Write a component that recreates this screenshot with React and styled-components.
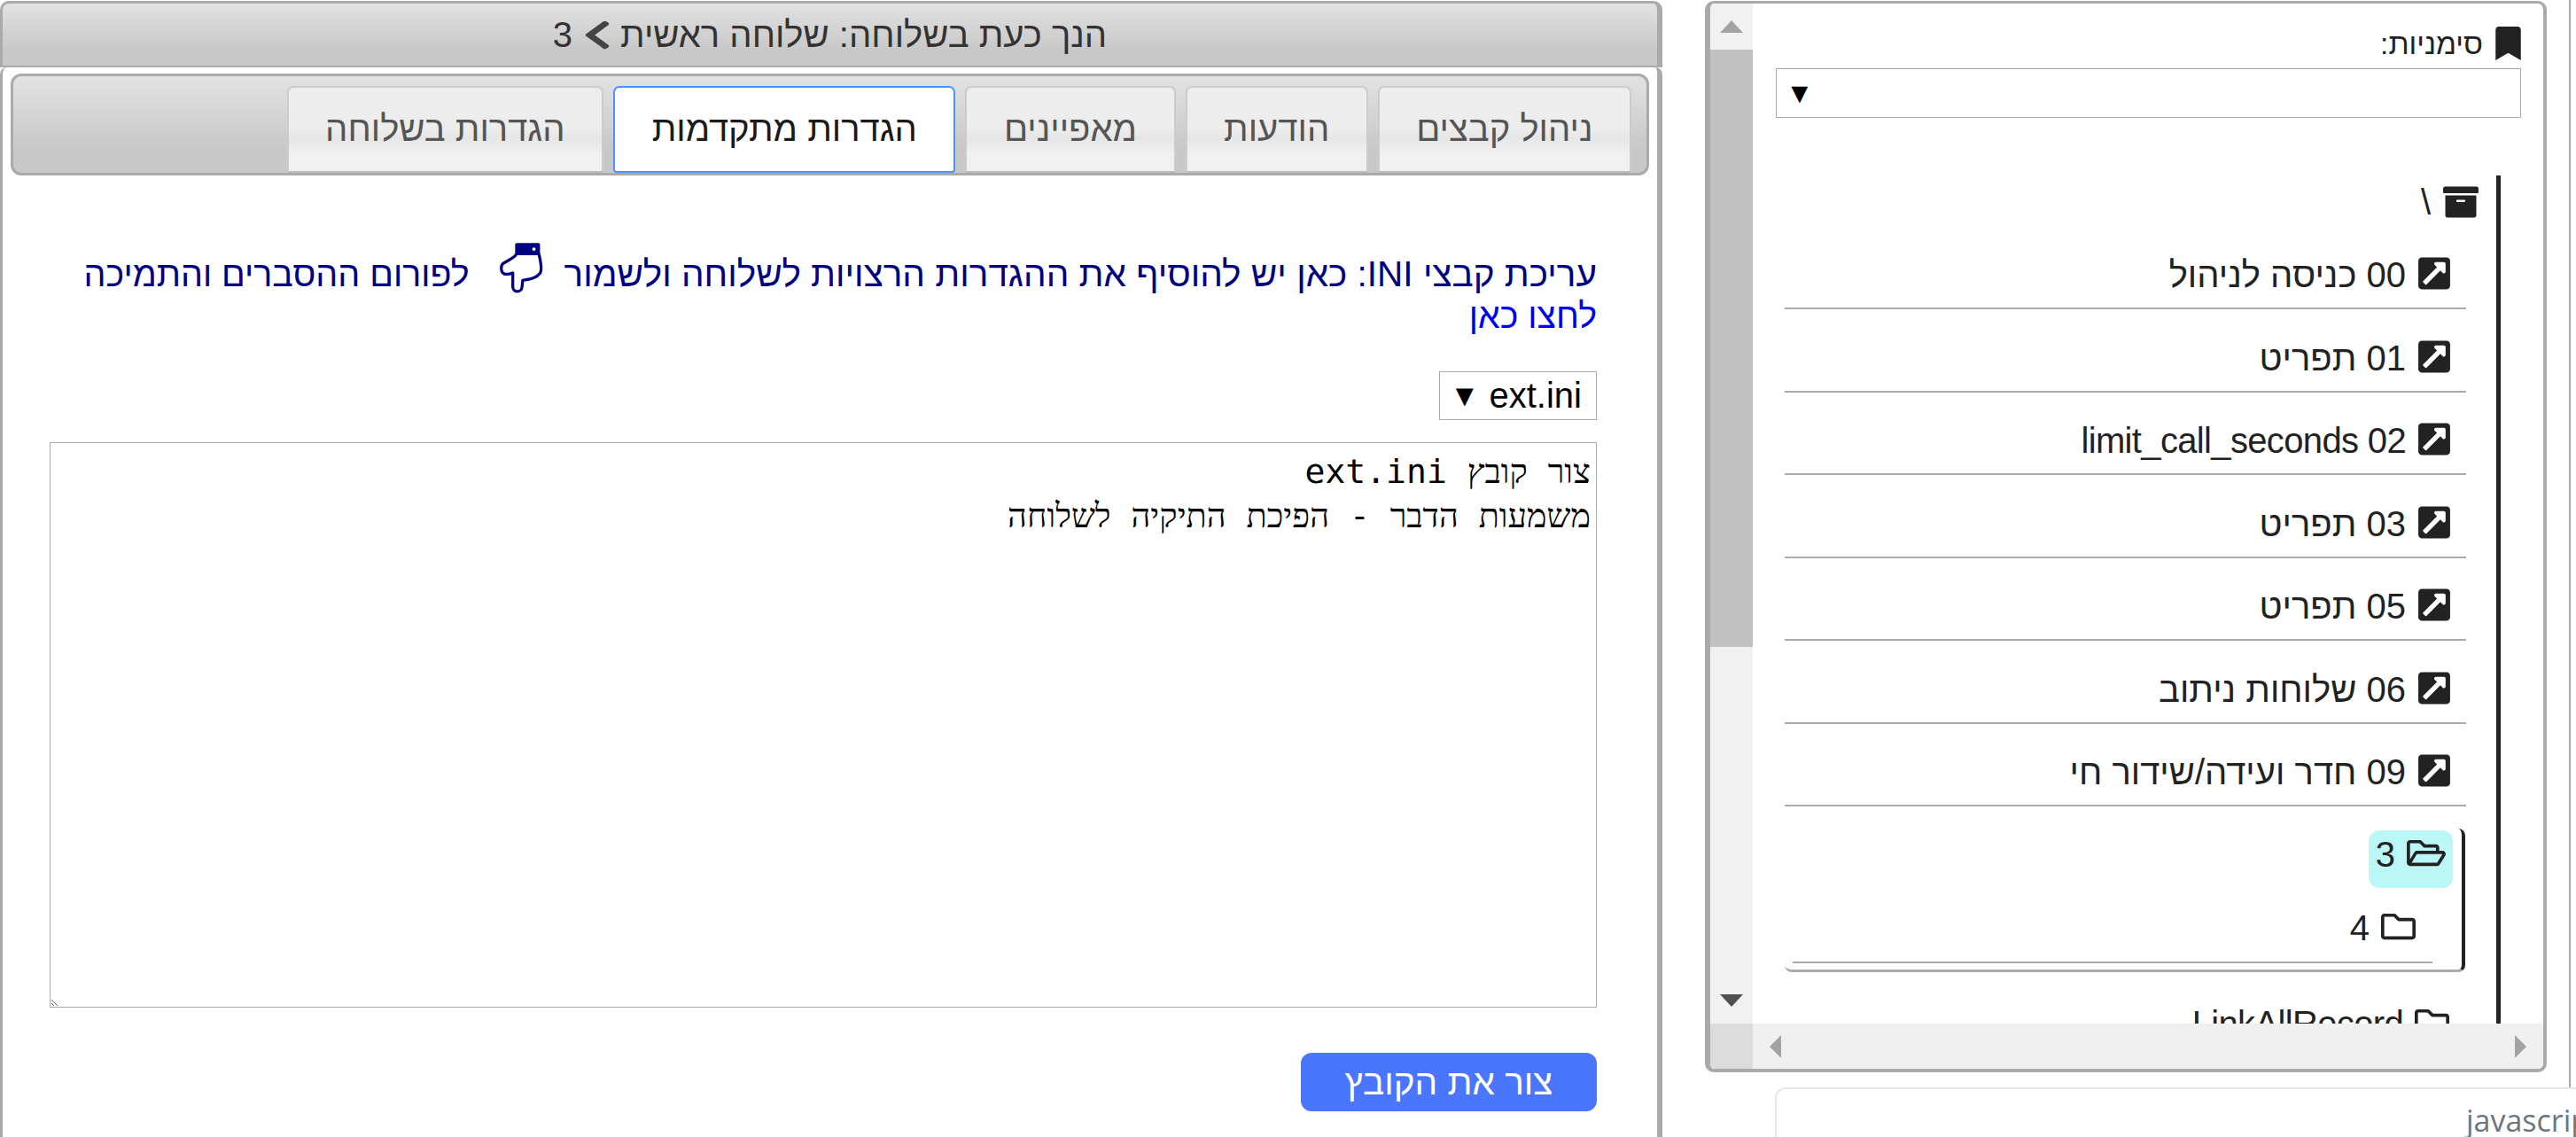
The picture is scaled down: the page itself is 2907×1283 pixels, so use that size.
import React from 'react';
import styled, { createGlobalStyle } from 'styled-components';
import {
  FaBookmark,
  FaArchive,
  FaExternalLinkSquareAlt,
  FaRegFolder,
  FaRegFolderOpen,
  FaChevronLeft,
} from 'react-icons/fa';

const GlobalStyle = createGlobalStyle`
  html, body {
    margin: 0;
    padding: 0;
    background: #fff;
    overflow: hidden;
  }
  * {
    box-sizing: border-box;
  }
`;

const Page = styled.div`
  direction: rtl;
  display: flex;
  gap: 48px;
  width: 2907px;
  height: 1283px;
  overflow: hidden;
  font-family: 'Liberation Sans', Arial, sans-serif;
  color: #222;
`;

const SideColumn = styled.aside`
  width: 983px;
  flex: none;
  display: flex;
  flex-direction: column;
`;

const SideTop = styled.div`
  display: flex;
  height: 1227px;
  flex: none;
`;

const EdgeStrip = styled.div`
  width: 33px;
  flex: none;
  padding-right: 6px;
  &::after {
    content: '';
    display: block;
    height: 100%;
    width: 2px;
    background: #aaa;
  }
`;

const SidePanel = styled.div`
  width: 950px;
  height: 1209px;
  margin-top: 1px;
  border: solid #aaa;
  border-width: 3px 4px 4px 6px;
  border-radius: 10px;
  overflow: hidden;
  display: grid;
  grid-template-columns: 1fr 48px;
  grid-template-rows: 1fr 51px;
`;

const SideScroll = styled.div`
  overflow: hidden;
  padding: 27px 25px 0 0;
  min-height: 0;
`;

const BookmarkLabel = styled.div`
  display: flex;
  align-items: center;
  gap: 14px;
  height: 36px;
  font-size: 33.5px;
  svg {
    width: 29px;
    height: 38px;
  }
  span {
    padding-top: 2px;
  }
`;

const SelectBox = styled.div`
  display: flex;
  align-items: center;
  justify-content: flex-end;
  height: 56px;
  width: 841px;
  margin-top: 10px;
  padding-left: 10px;
  border: 1.5px solid #aaa;
  font-size: 32px;
  color: #000;
`;

const Tree = styled.div`
  margin: 65px 23px 0 0;
  padding-right: 20px;
  border-right: 5px solid #222;
  height: 960px;
  width: 820px;
  overflow: hidden;
`;

const RootRow = styled.div`
  display: flex;
  align-items: center;
  gap: 14px;
  height: 36px;
  margin: 12px 0 44px;
  font-size: 40px;
  svg {
    width: 40px;
    height: 40px;
  }
`;

const LinkRow = styled.div`
  display: flex;
  align-items: center;
  gap: 14px;
  height: 59px;
  width: 769px;
  margin: 0 14px 34.5px 0;
  padding-bottom: 20px;
  border-bottom: 2px solid #aaa;
  font-size: 40px;
  svg {
    width: 36px;
    height: 41px;
    margin-right: 18px;
  }
`;

const RowLabel = styled.span`
  padding-top: 4px;
  letter-spacing: ${(p) => (p.$tight ? '-0.65px' : 'normal')};
`;

const FolderGroup = styled.div`
  width: 768px;
  height: 162px;
  margin: -9.5px 15px 0 0;
  border-right: 4px solid #222;
  border-bottom: 3px solid #aaa;
  border-radius: 0 8px 8px 8px;
  padding-top: 2px;
`;

const FolderLine = styled.div`
  display: flex;
  align-items: center;
  gap: 13px;
  font-size: 40px;
  svg {
    width: 39px;
    height: 39px;
  }
`;

const SelectedFolder = styled(FolderLine)`
  width: 95px;
  height: 65px;
  margin-right: 10px;
  padding: 0 8px 14px 0;
  background: #bcf7f7;
  border-radius: 12px;
  svg {
    width: 44px;
  }
`;

const PlainFolder = styled(FolderLine)`
  margin: 23px 52px 0 0;
  height: 40px;
`;

const GroupRule = styled.div`
  width: 722px;
  margin: 20px 33px 0 0;
  height: 2px;
  background: #aaa;
`;

const ClippedFolder = styled(FolderLine)`
  margin: 32px 33px 0 0;
`;

const VerticalBar = styled.div`
  background: #f1f1f1;
  display: flex;
  flex-direction: column;
  align-items: center;
`;

const BarEnd = styled.div`
  height: 52px;
  width: 100%;
  flex: none;
  display: flex;
  align-items: center;
  justify-content: center;
`;

const Thumb = styled.div`
  height: 674px;
  width: 100%;
  flex: none;
  background: #c1c1c1;
`;

const BarSpace = styled.div`
  flex: 1;
`;

const Tri = styled.div`
  width: 0;
  height: 0;
  border-style: solid;
  border-color: transparent;
  ${(p) => p.$dir === 'up' && `border-width: 0 13px 14px; border-bottom-color: ${p.$color};`}
  ${(p) => p.$dir === 'down' && `border-width: 14px 13px 0; border-top-color: ${p.$color};`}
  ${(p) => p.$dir === 'left' && `border-width: 13px 13px 13px 0; border-right-color: ${p.$color};`}
  ${(p) => p.$dir === 'right' && `border-width: 13px 0 13px 13px; border-left-color: ${p.$color};`}
`;

const HorizontalBar = styled.div`
  background: #f0f0f0;
  display: flex;
  align-items: center;
  justify-content: space-between;
  padding: 0 19px;
`;

const Corner = styled.div`
  background: #dcdcdc;
`;

const Footer = styled.div`
  flex: 1;
  width: 904px;
  border-top: 2px solid #e6e6e6;
  border-left: 2px solid #e6e6e6;
  border-top-left-radius: 12px;
  direction: ltr;
  font-family: 'Open Sans', sans-serif;
  font-size: 34px;
  line-height: 46px;
  color: #6c757d;
  white-space: nowrap;
  overflow: hidden;
  padding: 12px 0 0 778px;
`;

const Main = styled.main`
  width: 1876px;
  flex: none;
  display: flex;
  flex-direction: column;
  height: 1283px;
`;

const TitleBar = styled.header`
  height: 75px;
  flex: none;
  margin-top: 1px;
  border: solid #aaa;
  border-width: 3px 6px 2px 3px;
  border-radius: 10px 10px 0 0;
  background: linear-gradient(#e2e2e2, #c8c8c8 75%);
  display: flex;
  align-items: center;
  justify-content: center;
  font-size: 40px;
  color: #333;
  svg {
    width: 32px;
    height: 37px;
    margin: 0 10px 0 12px;
    fill: #444;
  }
`;

const Body = styled.div`
  flex: 1;
  border: solid #aaa;
  border-width: 0 6px 0 3px;
  border-radius: 8px 8px 0 0;
  padding: 7px 9px 0;
  background: #fff;
`;

const TabBar = styled.nav`
  display: flex;
  gap: 11px;
  height: 115px;
  padding: 11px 17px 0 0;
  border: 3px solid #aaa;
  border-radius: 12px;
  background: linear-gradient(#e2e2e2, #c8c8c8 75%);
`;

const Tab = styled.div`
  height: 98px;
  padding: 0 41.5px 2px;
  display: flex;
  align-items: center;
  font-size: 40px;
  border: 2px solid ${(p) => (p.$active ? '#4d90fe' : '#ccc')};
  border-bottom-color: ${(p) => (p.$active ? '#4d90fe' : '#bbb')};
  border-radius: 7px 7px ${(p) => (p.$active ? '4px 4px' : '0 0')};
  color: ${(p) => (p.$active ? '#1a1a1a' : '#555')};
  background: ${(p) => (p.$active ? '#fff' : 'linear-gradient(#ededed 50%, #e6e6e6 60%, #f1f1f1 80%)')};
`;

const Form = styled.div`
  padding: 0 59px 0 44px;
  display: flex;
  flex-direction: column;
`;

const Intro = styled.p`
  margin: 88px 0 0;
  font-size: 40.5px;
  line-height: 47px;
  color: #000080;
  a {
    color: #0000ee;
    text-decoration: none;
  }
  svg {
    width: 49px;
    height: 58px;
    margin: -20px 24px 0 34px;
    vertical-align: -9px;
  }
`;

const ForumText = styled.span`
  font-size: 39.4px;
`;

const FileSelect = styled.div`
  align-self: flex-start;
  display: flex;
  align-items: center;
  justify-content: space-between;
  width: 178px;
  height: 55px;
  margin-top: 39px;
  padding: 0 16px 0 11px;
  border: 1.5px solid #aaa;
  font-size: 40px;
  color: #000;
  span {
    font-size: 34px;
  }
`;

const Editor = styled.textarea`
  display: block;
  width: 100%;
  height: 638px;
  margin-top: 25px;
  padding: 7px 6px;
  border: 1.5px solid #aaa;
  outline: none;
  direction: rtl;
  font-family: 'DejaVu Sans Mono', 'Liberation Serif', monospace;
  font-size: 38px;
  line-height: 50px;
  color: #000;
`;

const SaveButton = styled.button`
  align-self: flex-start;
  width: 334px;
  height: 66px;
  margin-top: 51px;
  border: none;
  border-radius: 12px;
  background: #4a76fd;
  color: #fff;
  font-family: inherit;
  font-size: 40.5px;
`;

const links = [
  { text: '00 כניסה לניהול' },
  { text: '01 תפריט' },
  { text: '02 limit_call_seconds', tight: true },
  { text: '03 תפריט' },
  { text: '05 תפריט' },
  { text: '06 שלוחות ניתוב' },
  { text: '09 חדר ועידה/שידור חי' },
];

function HandIcon() {
  return (
    <svg viewBox="0 0 150 174" fill="none" stroke="#000080" strokeWidth="10" strokeLinejoin="round">
      <path d="M58 4h76v32H58z" fill="#000080" />
      <path d="M58 36C52 50 30 58 14 68C2 74 2 100 16 106C26 108 36 106 45 102L45 150C45 172 75 172 77 150L79 128C100 124 125 122 140 102C148 88 140 60 135 36" />
      <circle cx="118" cy="20" r="6" fill="#fff" stroke="none" />
    </svg>
  );
}

export default function App() {
  return (
    <Page>
      <GlobalStyle />
      <SideColumn>
        <SideTop>
          <EdgeStrip />
          <SidePanel>
            <SideScroll>
              <BookmarkLabel>
                <FaBookmark />
                <span>סימניות:</span>
              </BookmarkLabel>
              <SelectBox>▼</SelectBox>
              <Tree>
                <RootRow>
                  <FaArchive />\
                </RootRow>
                {links.map((link) => (
                  <LinkRow key={link.text}>
                    <FaExternalLinkSquareAlt />
                    <RowLabel $tight={link.tight}>{link.text}</RowLabel>
                  </LinkRow>
                ))}
                <FolderGroup>
                  <SelectedFolder>
                    <FaRegFolderOpen />
                    <RowLabel>3</RowLabel>
                  </SelectedFolder>
                  <PlainFolder>
                    <FaRegFolder />
                    <RowLabel>4</RowLabel>
                  </PlainFolder>
                  <GroupRule />
                </FolderGroup>
                <ClippedFolder>
                  <FaRegFolder />
                  <RowLabel $tight>LinkAllRecord</RowLabel>
                </ClippedFolder>
              </Tree>
            </SideScroll>
            <VerticalBar>
              <BarEnd>
                <Tri $dir="up" $color="#a3a3a3" />
              </BarEnd>
              <Thumb />
              <BarSpace />
              <BarEnd>
                <Tri $dir="down" $color="#505050" />
              </BarEnd>
            </VerticalBar>
            <HorizontalBar>
              <Tri $dir="right" $color="#a3a3a3" />
              <Tri $dir="left" $color="#a3a3a3" />
            </HorizontalBar>
            <Corner />
          </SidePanel>
        </SideTop>
        <Footer>javascript</Footer>
      </SideColumn>
      <Main>
        <TitleBar>
          הנך כעת בשלוחה: שלוחה ראשית
          <FaChevronLeft preserveAspectRatio="none" />3
        </TitleBar>
        <Body>
          <TabBar>
            <Tab>ניהול קבצים</Tab>
            <Tab>הודעות</Tab>
            <Tab>מאפיינים</Tab>
            <Tab $active>הגדרות מתקדמות</Tab>
            <Tab>הגדרות בשלוחה</Tab>
          </TabBar>
          <Form>
            <Intro>
              עריכת קבצי INI: כאן יש להוסיף את ההגדרות הרצויות לשלוחה ולשמור
              <HandIcon />
              <ForumText>
                לפורום ההסברים והתמיכה <a href="#">לחצו כאן</a>
              </ForumText>
            </Intro>
            <FileSelect>
              ext.ini
              <span>▼</span>
            </FileSelect>
            <Editor defaultValue={'צור קובץ ext.ini\nמשמעות הדבר - הפיכת התיקיה לשלוחה'} />
            <SaveButton>צור את הקובץ</SaveButton>
          </Form>
        </Body>
      </Main>
    </Page>
  );
}
